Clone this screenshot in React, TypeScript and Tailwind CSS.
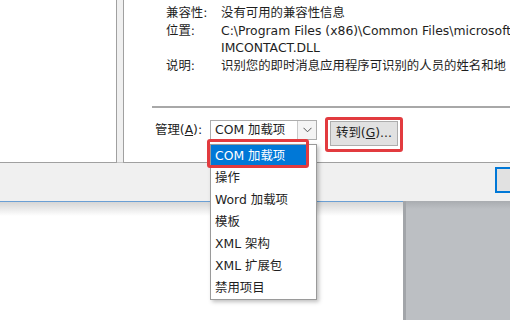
export default function App() {
  const items = ["操作", "Word 加载项", "模板", "XML 架构", "XML 扩展包", "禁用项目"];
  return (
    <div className="relative w-[510px] h-[320px] overflow-hidden bg-white font-['DejaVu_Sans','Noto_Sans_CJK_SC',sans-serif] text-[12.4px] text-[#1e1e1e]">
      {/* top area */}
      <div className="flex h-[163px] bg-[#f0f0f0]">
        <div className="w-[117px] shrink-0 bg-white border-r border-b border-[#a0a0a0]" />
        <div className="w-[6px] shrink-0 border-b border-[#c8c8c8]" />
        <div className="flex-1 min-w-0 overflow-hidden bg-white border-l border-b border-[#a0a0a0] flex flex-col">
          <div className="grid grid-cols-[55px_1fr] pl-[42px] pt-[4px] leading-[17.5px] whitespace-nowrap">
            <span>兼容性:</span>
            <span>没有可用的兼容性信息</span>
            <span>位置:</span>
            <span>C:\Program Files (x86)\Common Files\microsoft</span>
            <span />
            <span>IMCONTACT.DLL</span>
            <span>说明:</span>
            <span>识别您的即时消息应用程序可识别的人员的姓名和地</span>
          </div>
          <div className="ml-[28px] mt-[32px] h-[2px] bg-[#a8a8a8]" />
          <div className="flex items-start mt-[12px] ml-[31px]">
            <div className="w-[55px] shrink-0 h-[20px] leading-[20px] whitespace-nowrap">
              管理(<span className="underline">A</span>):
            </div>
            <div className="w-[107px] shrink-0 h-[20px] border border-[#adadad] bg-white flex">
              <div className="flex-1 pl-[4px] leading-[18px] whitespace-nowrap overflow-hidden">COM 加载项</div>
              <div className="w-[19px] shrink-0 border-l border-[#c8c8c8] bg-[#f4f4f4] flex items-center justify-center">
                <svg width="9" height="6" viewBox="0 0 9 6">
                  <path d="M0.5 0.8 L4.5 4.8 L8.5 0.8" fill="none" stroke="#555" strokeWidth="1" />
                </svg>
              </div>
            </div>
            <div className="ml-[13px] mt-[1px] w-[68px] shrink-0 h-[25px] border border-[#adadad] bg-[#e1e1e1] flex items-center justify-center whitespace-nowrap">
              转到(<span className="underline">G</span>)...
            </div>
          </div>
        </div>
      </div>

      {/* button band */}
      <div className="h-[38px] bg-[#f0f0f0] pl-[495px] pt-[4px]">
        <div className="w-[30px] h-[26px] border-2 border-[#0078d7] bg-[#e1e1e1]" />
      </div>

      {/* below dialog */}
      <div className="flex h-[119px]">
        <div className="w-[403px] shrink-0 flex flex-col">
          <div className="h-[1px] bg-[#6a9fd4]" />
          <div className="h-[14px] bg-gradient-to-b from-[#d6d6d6] to-white" />
        </div>
        <div className="flex-1 bg-[#bcbfc3] border-l-[3px] border-[#a2a5a9] flex flex-col">
          <div className="h-[8px] bg-gradient-to-b from-[#a9acb0] to-[#bcbfc3]" />
        </div>
      </div>

      {/* dropdown list */}
      <div className="absolute left-[210px] top-[144px] w-[107px] bg-white border border-[#9a9a9a] shadow-[2px_2px_4px_rgba(0,0,0,0.25)]">
        <div className="h-[22px] leading-[22px] pl-[4px] mr-[10px] bg-[#0078d7] text-white whitespace-nowrap">COM 加载项</div>
        {items.map((t) => (
          <div key={t} className="h-[22px] leading-[22px] pl-[4px] whitespace-nowrap">
            {t}
          </div>
        ))}
      </div>

      {/* red highlight boxes */}
      <div className="absolute left-[207px] top-[139px] w-[102px] h-[29px] border-[3px] border-[#e23b3f] rounded-[3px]" />
      <div className="absolute left-[325px] top-[117px] w-[78px] h-[35px] border-[3px] border-[#e23b3f] rounded-[3px]" />
    </div>
  );
}
